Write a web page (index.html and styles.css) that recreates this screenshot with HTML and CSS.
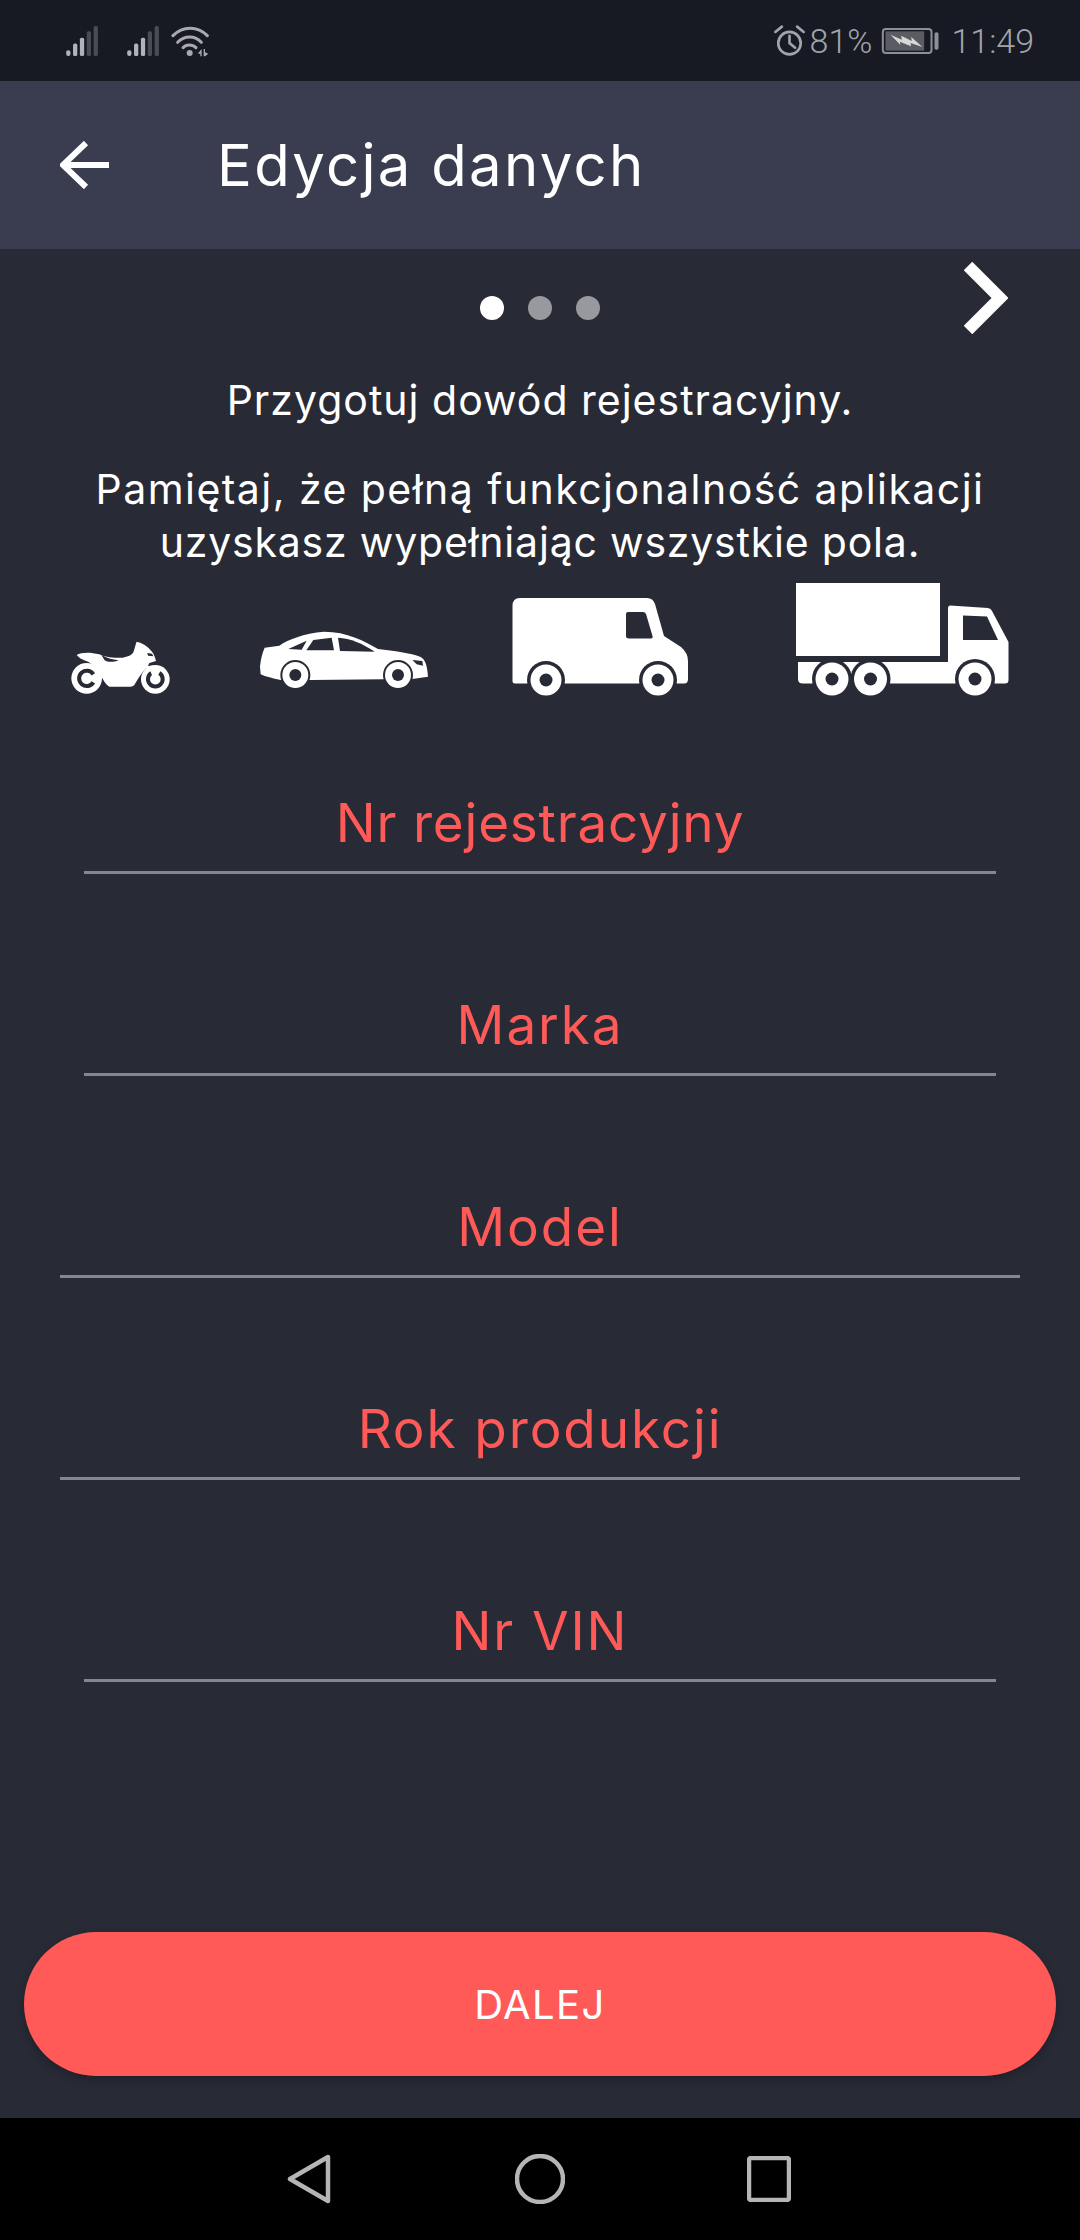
FILE: index.html
```html
<!DOCTYPE html>
<html lang="pl">
<head>
<meta charset="utf-8">
<title>Edycja danych</title>
<link rel="stylesheet" href="styles.css">
</head>
<body>
<div class="screen">
  <div class="status">
    <div class="status-left">
      <svg class="sig" viewBox="20 20 112 104"><g class="bar-on"><rect x="23" y="100" width="13" height="18" rx="6"/><rect x="44" y="80" width="13" height="38" rx="5"/><rect x="65" y="62" width="13" height="56" rx="5"/></g><g class="bar-off"><rect x="86" y="42" width="13" height="76" rx="5"/><rect x="107" y="26" width="13" height="92" rx="5"/></g></svg>
      <svg class="sig sig-2" viewBox="20 20 112 104"><g class="bar-on"><rect x="23" y="100" width="13" height="18" rx="6"/><rect x="44" y="80" width="13" height="38" rx="5"/><rect x="65" y="62" width="13" height="56" rx="5"/></g><g class="bar-off"><rect x="86" y="42" width="13" height="76" rx="5"/><rect x="107" y="26" width="13" height="92" rx="5"/></g></svg>
      <svg class="wifi" viewBox="330 24 114 96"><g class="wifi-arc"><path d="M336 56C365 26 410 26 439 56"/><path d="M350 76C370 55 402 55 421 76"/><path d="M366 92C376 81 394 81 405 92"/></g><g class="wifi-dot"><circle cx="386" cy="108" r="9"/><path d="M412 108L422 96V118H418V110H412Z"/><path d="M428 96H432V106L442 110L432 118H428Z"/></g></svg>
    </div>
    <div class="status-right">
      <svg class="alarm" viewBox="10 20 100 100"><circle cx="60" cy="78" r="34"/><path d="M60 56V78L77 92"/><path d="M17 44L37 28"/><path d="M83 28L103 44"/></svg>
      <span class="pct">81%</span>
      <svg class="batt" viewBox="340 32 176 84"><rect class="batt-shell" x="345" y="38" width="146" height="72" rx="9"/><rect class="batt-level" x="353" y="45" width="116" height="58"/><rect class="batt-cap" x="500" y="48" width="12" height="52" rx="5"/><path class="batt-bolt" d="M368 55L402 70L400 58L432 74L430 62L464 92L428 80L430 90L396 76L398 86Z"/></svg>
      <span class="clock">11:49</span>
    </div>
  </div>

  <header class="appbar">
    <svg class="back" viewBox="0 0 50 48"><path d="M49 24H4M26 2L3 24L26 46"/></svg>
    <h1 class="title">Edycja danych</h1>
  </header>

  <main class="main">
    <div class="pager">
      <div class="dots"><span class="dot dot-on"></span><span class="dot"></span><span class="dot"></span></div>
      <svg class="next" viewBox="0 0 44 72"><path d="M4 4L36 36L4 68"/></svg>
    </div>

    <p class="lead">Przygotuj dowód rejestracyjny.</p>
    <p class="note">Pamiętaj, że pełną funkcjonalność aplikacji<br><span class="note-tail">uzyskasz wypełniając wszystkie pola.</span></p>

    <div class="vehicles">
      <svg class="moto" viewBox="0 0 330 192">
        <path class="w" d="M32 60C45 52 70 50 100 58C115 66 140 70 170 68C185 66 198 60 202 52C206 42 208 30 212 20C225 22 245 32 258 50C264 58 268 68 270 78L250 84L246 92L258 96L276 130L262 134L240 100C228 112 216 132 205 150C198 156 190 156 180 155H130C120 150 115 140 100 115C90 98 78 84 60 78C48 74 38 68 32 60Z"/>
        <path class="d" d="M106 60C120 68 138 74 158 76C142 82 125 82 116 76Z"/>
        <path class="d" d="M244 54L258 56L262 64L246 62Z"/>
        <circle class="w" cx="62" cy="130" r="46"/>
        <path class="ring" d="M82 118A23 23 0 1 0 82 142"/>
        <circle class="w" cx="268" cy="133" r="43"/>
        <path class="ring" d="M256 114A22 22 0 1 0 280 114"/>
        <path class="w" d="M250 92L262 92L274 134L262 136Z"/>
      </svg>
      <svg class="car" viewBox="0 0 540 210">
        <path class="w" d="M18 125C20 105 24 85 32 68L76 62C100 45 150 24 210 20C280 20 330 48 372 72C420 78 470 84 500 96C515 104 520 125 522 155L470 163H385L170 165H80C55 160 35 155 20 148Z"/>
        <path class="d" d="M103 72L158 47L143 74Z"/>
        <path class="d" d="M178 45L233 38L240 76H157Z"/>
        <path class="d" d="M252 38C290 40 325 55 362 80L258 78Z"/>
        <path class="d" d="M475 105L505 108L507 122L488 118Z"/>
        <circle class="d" cx="124" cy="150" r="45"/>
        <circle class="d" cx="432" cy="150" r="45"/>
        <rect class="d" x="60" y="168" width="130" height="42"/>
        <rect class="d" x="370" y="168" width="130" height="42"/>
        <circle class="w" cx="124" cy="150" r="39"/>
        <circle class="d" cx="124" cy="150" r="18"/>
        <circle class="w" cx="432" cy="150" r="39"/>
        <circle class="d" cx="432" cy="150" r="18"/>
      </svg>
      <svg class="van" viewBox="512 599 177 98">
        <path class="w" d="M512.5 607Q512.5 599 520 599H647Q653 599 655 605L664 637L681 648Q688 654 688 662V680Q688 684.5 684 684.5H520L515 684.5Q512.5 684.5 512.5 682Z"/>
        <path class="d" d="M628 613H643Q645 613 646 615L652.5 637Q653 639.5 651 639.5H629Q626 639.5 626 637V615Q626 613 628 613Z"/>
        <circle class="d" cx="546" cy="681" r="19"/>
        <circle class="d" cx="658" cy="681" r="19"/>
        <rect class="d" x="525" y="685" width="42" height="12"/>
        <rect class="d" x="637" y="685" width="42" height="12"/>
        <circle class="w" cx="546" cy="681" r="15.5"/>
        <circle class="d" cx="546" cy="681" r="6.5"/>
        <circle class="w" cx="658" cy="681" r="15.5"/>
        <circle class="d" cx="658" cy="681" r="6.5"/>
      </svg>
      <svg class="truck" viewBox="796 584 214 114">
        <rect class="w" x="796" y="584" width="144" height="73"/>
        <path class="w" d="M948 609Q948 606.5 950 606.5L988 609Q991 609.5 992 612L1008.5 643V681Q1008.5 684.5 1005 684.5H803Q798 684.5 798 680V663H948Z"/>
        <path class="d" d="M963 616.5L987 617.5L998 641H963Z"/>
        <circle class="d" cx="832" cy="680" r="20"/>
        <circle class="d" cx="870.5" cy="680" r="20"/>
        <circle class="d" cx="975" cy="680" r="20"/>
        <rect class="d" x="810" y="685" width="84" height="13"/>
        <rect class="d" x="953" y="685" width="44" height="13"/>
        <circle class="w" cx="832" cy="680" r="16.5"/>
        <circle class="d" cx="832" cy="680" r="6.5"/>
        <circle class="w" cx="870.5" cy="680" r="16.5"/>
        <circle class="d" cx="870.5" cy="680" r="6.5"/>
        <circle class="w" cx="975" cy="680" r="16.5"/>
        <circle class="d" cx="975" cy="680" r="6.5"/>
      </svg>
    </div>

    <div class="fields">
      <div class="field field-long">Nr rejestracyjny</div>
      <div class="field">Marka</div>
      <div class="field field-wide">Model</div>
      <div class="field field-wide">Rok produkcji</div>
      <div class="field">Nr VIN</div>
    </div>

    <button class="cta">DALEJ</button>
  </main>

  <nav class="navbar">
    <svg class="nav-back" viewBox="0 0 44 50"><path d="M41 3V47L3 25Z"/></svg>
    <svg class="nav-home" viewBox="0 0 50 50"><circle cx="25" cy="25" r="23"/></svg>
    <svg class="nav-recent" viewBox="0 0 44 46"><rect x="2" y="2" width="40" height="42" rx="2"/></svg>
  </nav>
</div>
</body>
</html>
```

FILE: styles.css
```css
* { box-sizing: border-box; }

html, body {
  margin: 0;
  padding: 0;
  background: #282a36;
}

.screen {
  width: 1080px;
  height: 2240px;
  display: flex;
  flex-direction: column;
  overflow: hidden;
  font-family: Inter, "Noto Sans", sans-serif;
  color: #fff;
}

/* status bar */
.status {
  height: 81px;
  flex: none;
  background: #171a23;
  display: flex;
  justify-content: space-between;
  align-items: center;
  padding: 0 46px 0 65px;
}

.status-left, .status-right {
  display: flex;
  align-items: center;
}

.sig { width: 37px; height: 34px; }
.sig-2 { margin-left: 24px; }
.bar-on { fill: #b2b3b8; }
.bar-off { fill: #4a4c55; }

.wifi { width: 38px; height: 32px; margin-left: 8px; }
.wifi-arc { fill: none; stroke: #a9aab0; stroke-width: 9; stroke-linecap: round; }
.wifi-dot { fill: #a9aab0; }

.status-right {
  font-family: Roboto, sans-serif;
  font-weight: 300;
  font-size: 34px;
  color: #a2a4aa;
}

.alarm {
  width: 33px;
  height: 33px;
  fill: none;
  stroke: #a2a4aa;
  stroke-width: 8;
  stroke-linecap: round;
}

.pct { margin-left: 4px; }

.batt { width: 59px; height: 28px; margin-left: 9px; }
.batt-shell { fill: none; stroke: #8d8f96; stroke-width: 6; }
.batt-level { fill: #5b5c63; }
.batt-cap { fill: #8d8f96; }
.batt-bolt { fill: #d8d8d8; }

.clock { margin-left: 11px; }

/* app bar */
.appbar {
  height: 168px;
  flex: none;
  background: #3a3d50;
  display: flex;
  align-items: center;
  padding-left: 60px;
}

.back {
  width: 50px;
  height: 48px;
  fill: none;
  stroke: #fff;
  stroke-width: 6;
}

.title {
  margin: 0 0 0 107px;
  font-size: 58px;
  font-weight: 400;
  line-height: 1;
  letter-spacing: 2.3px;
}

/* main */
.main {
  flex: 1;
  display: flex;
  flex-direction: column;
  background: #282a36;
}

.pager {
  display: grid;
  grid-template-columns: 1fr auto 1fr;
  height: 100px;
  padding-right: 72px;
  padding-left: 72px;
}

.dots {
  grid-column: 2;
  display: flex;
  gap: 24px;
  margin-top: 47px;
  height: 24px;
}

.dot {
  width: 24px;
  height: 24px;
  border-radius: 50%;
  background: #98999f;
}

.dot-on { background: #fff; }

.next {
  grid-column: 3;
  justify-self: end;
  width: 44px;
  height: 72px;
  margin-top: 13px;
  fill: none;
  stroke: #fff;
  stroke-width: 12;
}

.lead, .note {
  margin: 0;
  text-align: center;
  font-size: 41px;
  line-height: 53px;
}

.lead { margin-top: 25px; letter-spacing: 1px; }
.note { margin-top: 36px; letter-spacing: 1.45px; }
.note-tail { letter-spacing: 0.8px; }

.vehicles {
  height: 128px;
  margin-top: 17px;
  display: flex;
  align-items: flex-end;
  padding-left: 66px;
}

.moto { width: 110px; height: 64px; margin-bottom: 15px; }
.car { width: 180px; height: 70px; margin-left: 78px; margin-bottom: 19px; }
.van { width: 177px; height: 98px; margin-left: 78px; margin-bottom: 18px; }
.truck { width: 214px; height: 114px; margin-left: 107px; margin-bottom: 17px; }

.w { fill: #fff; }
.d { fill: #282a36; }
.ring { fill: none; stroke: #282a36; stroke-width: 12; }

.fields {
  display: flex;
  flex-direction: column;
  gap: 120px;
  margin-top: 78px;
}

.field {
  margin: 0 84px;
  height: 82px;
  border-bottom: 3px solid #83858f;
  text-align: center;
  font-size: 53px;
  line-height: 62px;
  letter-spacing: 1.9px;
  color: #ff5a58;
}

.field-long { letter-spacing: 0.8px; }
.field-wide { margin: 0 60px; }

.cta {
  margin: auto 24px 42px;
  height: 144px;
  border: 0;
  border-radius: 72px;
  background: #ff5a58;
  color: #fff;
  font-family: inherit;
  font-size: 40px;
  font-weight: 400;
  letter-spacing: 1.4px;
  box-shadow: 0 4px 10px rgba(0, 0, 0, 0.25);
}

/* navigation bar */
.navbar {
  height: 122px;
  flex: none;
  background: #000;
  display: flex;
  align-items: center;
  padding-left: 287px;
}

.nav-back, .nav-home, .nav-recent {
  fill: none;
  stroke: #b5b5b5;
  stroke-width: 4.5;
  stroke-linejoin: round;
}

.nav-back { width: 44px; height: 50px; }
.nav-home { width: 50px; height: 50px; margin-left: 184px; }
.nav-recent { width: 44px; height: 46px; margin-left: 182px; }
```
